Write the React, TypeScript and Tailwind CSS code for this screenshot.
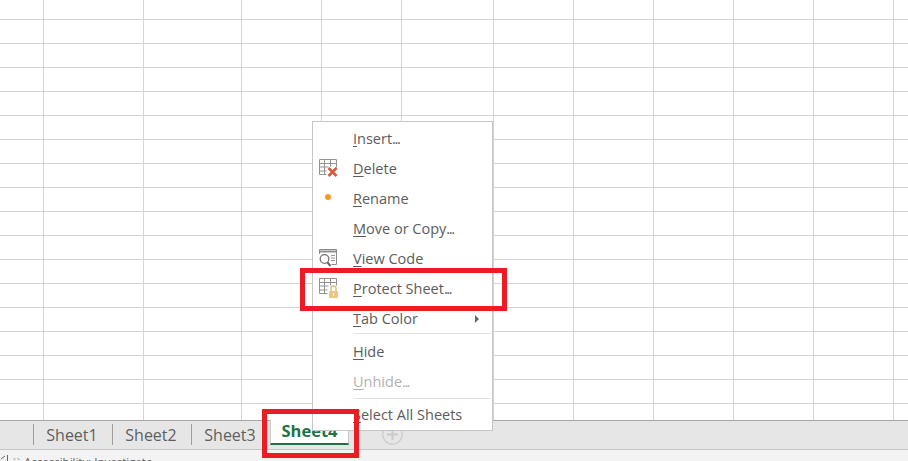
const COLS = [44, 100, 98, 80, 80, 92, 80, 80, 80, 80, 80, 15]
const ROWS = [20, ...Array.from({ length: 17 }, () => 24)]

function Grid() {
  return (
    <div className="h-[420px] overflow-hidden bg-white">
      {ROWS.map((h, r) => (
        <div key={r} className="flex border-b border-[#d4d4d4]" style={{ height: h }}>
          {COLS.map((w, c) => (
            <div key={c} className="shrink-0 border-r border-[#d4d4d4]" style={{ width: w }} />
          ))}
        </div>
      ))}
    </div>
  )
}

function DeleteIcon() {
  return (
    <svg width="20" height="20" viewBox="0 0 20 20" fill="none">
      <path d="M.5 15.5V.5h17v8M.5 15.5h7M.5 4.5h17M.5 8h9M.5 12h7M5.500.5v15M11.500.5v7" stroke="#929292" />
      <path d="M9.500 9l8 8M17.500 9l-8 8" stroke="#d9583b" strokeWidth="2.500" />
    </svg>
  )
}

function LockIcon() {
  return (
    <svg className="-mt-[2px]" width="20" height="20" viewBox="0 0 20 20" fill="none">
      <path d="M.5 15.5V.5h17v7M.5 15.5h8M.5 4.5h17M.5 8h9M.5 12h8M5.500.5v15M11.500.5v7" stroke="#929292" />
      <path d="M12 13v-2.500a2.500 2.500 0 0 1 5 0V13" stroke="#e3bd80" strokeWidth="1.500" />
      <rect x="10" y="13" width="9" height="7" rx="1" fill="#edc583" />
      <rect x="14" y="15" width="1" height="3" fill="#fff" />
    </svg>
  )
}

function CodeIcon() {
  return (
    <svg width="20" height="20" viewBox="0 0 20 20" fill="none">
      <path d="M.5 5V.5h17v15h-5" stroke="#8a8a8a" />
      <path d="M1 2.500h16" stroke="#8f8f8f" strokeWidth="2" />
      <path d="M12 6.500h4M12 9h4M12 11.500h4" stroke="#969696" />
      <circle cx="5.500" cy="10" r="4.300" stroke="#757575" strokeWidth="1.300" />
      <path d="M8.500 13.500l3 3.500" stroke="#666" strokeWidth="2" />
    </svg>
  )
}

type Item = { hot: string; rest: string; dots?: boolean; icon?: React.ReactNode; arrow?: boolean; disabled?: boolean }

function MenuRow({ hot, rest, dots, icon, arrow, disabled }: Item) {
  return (
    <div className={`flex h-[30px] items-center ${disabled ? "text-[#b1b1b1]" : "text-[#5c5c5c]"}`}>
      <div className="flex w-[40px] shrink-0 pl-[6px]">{icon}</div>
      <span className="text-[14.5px]">
        <span className="underline underline-offset-2">{hot}</span>
        {rest}
        {dots && <span className="tracking-[-1.4px]">...</span>}
      </span>
      {arrow && <div className="ml-auto mr-[13px] h-0 w-0 border-y-[4px] border-l-[4px] border-y-transparent border-l-[#666]" />}
    </div>
  )
}

function ContextMenu() {
  return (
    <div className="absolute left-[312px] top-[121px] w-[181px] border border-[#c6c6c6] bg-white pt-[2px]">
      <MenuRow hot="I" rest="nsert" dots />
      <MenuRow hot="D" rest="elete" icon={<DeleteIcon />} />
      <MenuRow hot="R" rest="ename" icon={<div className="mb-[4px] ml-[6px] h-[6px] w-[6px] rounded-full bg-[#f79a1f]" />} />
      <MenuRow hot="M" rest="ove or Copy" dots />
      <MenuRow hot="V" rest="iew Code" icon={<CodeIcon />} />
      <MenuRow hot="P" rest="rotect Sheet" dots icon={<LockIcon />} />
      <MenuRow hot="T" rest="ab Color" arrow />
      <div className="relative -mt-px mb-[3px] ml-[41px] mr-px h-px bg-[#e1e1e1]" />
      <MenuRow hot="H" rest="ide" />
      <MenuRow hot="U" rest="nhide" dots disabled />
      <div className="my-px ml-[41px] mr-px h-px bg-[#e1e1e1]" />
      <MenuRow hot="S" rest="elect All Sheets" />
    </div>
  )
}

function SheetTab({ name }: { name: string }) {
  return (
    <div className="flex h-[21px] w-[79px] items-center justify-center border-l border-[#9e9e9e] pr-[2px] text-[16px] text-[#5f5f5f]">
      {name}
    </div>
  )
}

export default function App() {
  return (
    <div className="relative h-[461px] w-[908px] overflow-hidden bg-white font-['Open_Sans','Noto_Sans',sans-serif]">
      <Grid />
      <div className="flex h-[30px] items-start border-t border-b border-t-[#a6a6a6] border-b-[#c6c6c6] bg-[#e6e6e6] pl-[33px]">
        <div className="mt-[3px] flex">
          <SheetTab name="Sheet1" />
          <SheetTab name="Sheet2" />
          <SheetTab name="Sheet3" />
        </div>
        <div className="-mt-px flex h-[25px] w-[79px] items-center justify-center border-x border-[#c6c6c6] border-b-2 border-b-[#217346] bg-white text-[16.5px] font-bold text-[#217346]">
          Sheet4
        </div>
        <svg className="ml-[33px] mt-[3px]" width="21" height="21" viewBox="0 0 21 21" fill="none">
          <circle cx="10.500" cy="10.500" r="9.800" stroke="#c9c9c9" strokeWidth="1.200" />
          <path d="M10.500 5v11M5 10.500h11" stroke="#c9c9c9" strokeWidth="2" />
        </svg>
      </div>
      <div className="flex h-[11px] overflow-hidden bg-[#f3f3f3] pt-[4px] text-[11.5px] leading-[16px] text-[#5f5f5f]">
        <svg className="mt-[1px] shrink-0" width="24" height="8" viewBox="0 0 24 8" fill="none">
          <path d="M1 4l4-3M7.500 0v8" stroke="#666" />
          <path d="M13.500 4h2M17.500 3l2 2" stroke="#888" />
        </svg>
        <span>Accessibility: Investigate</span>
      </div>

      <ContextMenu />

      <div className="absolute left-[300px] top-[268px] h-[43px] w-[207px] border-[5px] border-[#ed1c24]" />
      <div className="absolute left-[262px] top-[409px] h-[49px] w-[97px] border-[5px] border-[#ed1c24]" />
    </div>
  )
}
